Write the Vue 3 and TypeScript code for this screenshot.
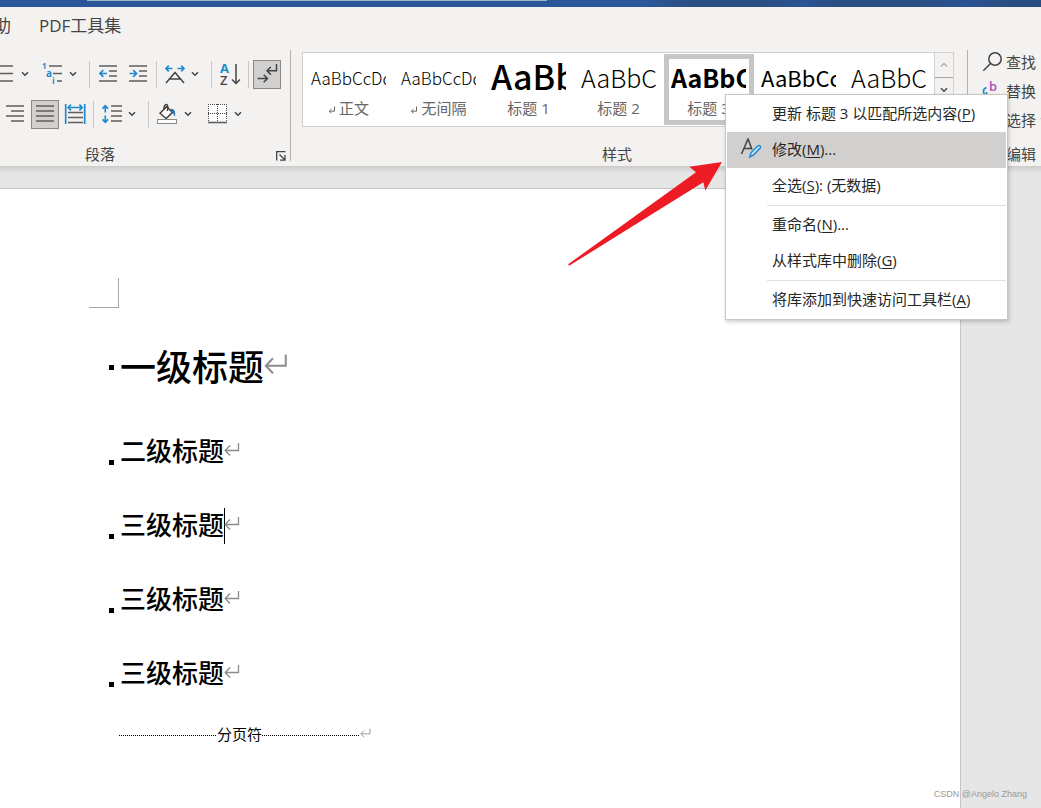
<script setup lang="ts">
interface StylePreset {
  name: string
  sample: string
  size: string
  mark?: boolean
  selected?: boolean
}

interface MenuEntry {
  text: string
  key: string
  tail: string
  icon?: boolean
  active?: boolean
  divided?: boolean
}

const presets: StylePreset[] = [
  { name: '正文', sample: 'AaBbCcDd', size: 'body', mark: true },
  { name: '无间隔', sample: 'AaBbCcDd', size: 'body', mark: true },
  { name: '标题 1', sample: 'AaBbC', size: 'huge' },
  { name: '标题 2', sample: 'AaBbCc', size: 'large' },
  { name: '标题 3', sample: 'AaBbCc', size: 'strong', selected: true },
  { name: '标题 4', sample: 'AaBbCcD', size: 'medium' },
  { name: '标题', sample: 'AaBbCc', size: 'large' },
]

const menu: MenuEntry[] = [
  { text: '更新 标题 3 以匹配所选内容(', key: 'P', tail: ')' },
  { text: '修改(', key: 'M', tail: ')...', icon: true, active: true },
  { text: '全选(', key: 'S', tail: '): (无数据)' },
  { text: '重命名(', key: 'N', tail: ')...', divided: true },
  { text: '从样式库中删除(', key: 'G', tail: ')' },
  { text: '将库添加到快速访问工具栏(', key: 'A', tail: ')', divided: true },
]

const headings = [
  { text: '二级标题', caret: false },
  { text: '三级标题', caret: true },
  { text: '三级标题', caret: false },
  { text: '三级标题', caret: false },
]
</script>

<template>
  <div class="app">
    <div class="titlebar"><div class="titleline"></div></div>

    <nav class="tabs">
      <button class="tab">帮助</button>
      <button class="tab">PDF工具集</button>
    </nav>

    <div class="ribbon">
      <section class="group paragraph">
        <div class="tools top">
          <div class="split">
            <button class="tool" aria-label="编号">
              <svg viewBox="0 0 24 24"><path class="ink" d="M2 4H20M2 11.5H20M2 19H20" /></svg>
            </button>
            <button class="drop" aria-label="编号选项"><svg viewBox="0 0 8 6"><path d="M1 1.2L4 4.2L7 1.2" /></svg></button>
          </div>
          <div class="split">
            <button class="tool" aria-label="多级列表">
              <svg viewBox="0 0 24 24">
                <path class="ink" d="M8 4H21M12 11.5H21M16 19H21" />
                <text class="bluetext" x="1" y="7" font-size="8">1</text>
                <text class="bluetext" x="5" y="15" font-size="10">a</text>
                <text class="bluetext" x="11" y="22" font-size="9">i</text>
              </svg>
            </button>
            <button class="drop" aria-label="多级列表选项"><svg viewBox="0 0 8 6"><path d="M1 1.2L4 4.2L7 1.2" /></svg></button>
          </div>
          <span class="bar"></span>
          <button class="tool" aria-label="减少缩进量">
            <svg viewBox="0 0 24 24"><path class="ink" d="M3 4H21M13 9H21M13 14H21M3 19H21" /><path class="blue" d="M11 11.5H4M7.3 8.2L4 11.5L7.3 14.8" /></svg>
          </button>
          <button class="tool" aria-label="增加缩进量">
            <svg viewBox="0 0 24 24"><path class="ink" d="M3 4H21M13 9H21M13 14H21M3 19H21" /><path class="blue" d="M3.5 11.5H10.5M7.2 8.2L10.5 11.5L7.2 14.8" /></svg>
          </button>
          <span class="bar"></span>
          <div class="split">
            <button class="tool" aria-label="中文版式">
              <svg viewBox="0 0 24 24"><path class="dark" d="M3 21L12 10.5L21 21M6.5 17H17.5" /><path class="blue" d="M9.5 6.5H3M5.8 3.7L3 6.5L5.8 9.3M14.5 6.5H21M18.2 3.7L21 6.5L18.2 9.3" /></svg>
            </button>
            <button class="drop" aria-label="中文版式选项"><svg viewBox="0 0 8 6"><path d="M1 1.2L4 4.2L7 1.2" /></svg></button>
          </div>
          <span class="bar"></span>
          <button class="tool" aria-label="排序">
            <svg viewBox="0 0 24 24">
              <text class="bluetext" x="2" y="11" font-size="13">A</text>
              <text class="darktext" x="2" y="23" font-size="13">Z</text>
              <path class="dark" d="M18 2V21.5M14 17.5L18 21.5L22 17.5" />
            </svg>
          </button>
          <span class="bar"></span>
          <button class="tool on" aria-label="显示编辑标记" aria-pressed="true">
            <svg viewBox="0 0 24 24"><path class="dark" d="M21.5 2V8.8H12M15.8 5L12 8.8L15.8 12.6M2.5 16.5H12.5M8.7 12.7L12.5 16.5L8.7 20.3" /></svg>
          </button>
        </div>

        <div class="tools bottom">
          <button class="tool" aria-label="右对齐">
            <svg viewBox="0 0 24 24"><path class="ink" d="M3 4H21M8 9H21M3 14H21M8 19H21" /></svg>
          </button>
          <button class="tool on" aria-label="两端对齐" aria-pressed="true">
            <svg viewBox="0 0 24 24"><path class="ink" d="M3 4H21M3 9H21M3 14H21M3 19H21" /></svg>
          </button>
          <button class="tool" aria-label="分散对齐">
            <svg viewBox="0 0 24 24"><path class="ink" d="M5 10.5H20M5 15.5H20M5 20.5H20" /><path class="blue" d="M2.7 2V22M21.7 2V22M5.2 5.5H19.2M8 2.7L5.2 5.5L8 8.3M16.4 2.7L19.2 5.5L16.4 8.3" /></svg>
          </button>
          <span class="bar"></span>
          <div class="split">
            <button class="tool" aria-label="行和段落间距">
              <svg viewBox="0 0 24 24"><path class="ink" d="M11 4H22M11 9H22M11 14H22M11 19H22" /><path class="blue" d="M5.3 10.5V4M2.5 6.6L5.3 3.8L8.1 6.6M5.3 13.5V20M2.5 17.4L5.3 20.2L8.1 17.4" /></svg>
            </button>
            <button class="drop" aria-label="间距选项"><svg viewBox="0 0 8 6"><path d="M1 1.2L4 4.2L7 1.2" /></svg></button>
          </div>
          <span class="bar"></span>
          <div class="split">
            <button class="tool" aria-label="底纹">
              <svg viewBox="0 0 24 24">
                <path class="dark fill" d="M5 11.3L11.7 4.6L17.5 10.4L11.2 16.5Z" />
                <path class="dark" d="M8.8 7.5C9 4 10 2.2 11.5 2.4C13 2.6 13 5 12.4 9" />
                <path class="drip" d="M15.5 6.8C19.5 6.6 20.8 9.5 20 14.5C18.8 13.5 18.6 11.4 17.6 10.2Z" />
                <rect class="swatch" x="2.5" y="17.5" width="19" height="4" />
              </svg>
            </button>
            <button class="drop wide" aria-label="底纹选项"><svg viewBox="0 0 8 6"><path d="M1 1.2L4 4.2L7 1.2" /></svg></button>
          </div>
          <div class="split">
            <button class="tool" aria-label="边框">
              <svg viewBox="0 0 24 24"><rect x="3" y="2" width="19" height="18" fill="#fff" /><path class="dots" d="M3 2.5H22M3.5 2V20M21.5 2V20M12.5 2V20M3 11.5H22" /><path class="ink" d="M3 20.5H22" /></svg>
            </button>
            <button class="drop wide" aria-label="边框选项"><svg viewBox="0 0 8 6"><path d="M1 1.2L4 4.2L7 1.2" /></svg></button>
          </div>
        </div>

        <footer class="caption cut">
          <span class="caption-text">段落</span>
          <button class="launcher" aria-label="段落设置">
            <svg viewBox="0 0 10 10"><path d="M0.7 9.5V0.7H9.5M3.5 3.5L8.5 8.5M9 4V9.2H4" /></svg>
          </button>
        </footer>
      </section>

      <span class="group-line"></span>

      <section class="group styles">
        <div class="gallery">
          <div class="presets">
            <button v-for="preset in presets" :key="preset.name" class="preset" :class="{ selected: preset.selected }">
              <span class="sample" :class="preset.size">{{ preset.sample }}</span>
              <span class="preset-name">
                <svg v-if="preset.mark" class="tiny" viewBox="0 0 8 8"><path d="M6.5 0.5V5.2H1.5M3.5 3L1.3 5.2L3.5 7.4" /></svg>
                {{ preset.name }}
              </span>
            </button>
          </div>
          <div class="scroller">
            <button class="scroll dim" aria-label="上一行"><svg viewBox="0 0 8 6"><path d="M1 4.5L4 1.5L7 4.5" /></svg></button>
            <button class="scroll" aria-label="下一行"><svg viewBox="0 0 8 6"><path d="M1 1.2L4 4.2L7 1.2" /></svg></button>
            <button class="scroll" aria-label="其他"><svg viewBox="0 0 8 6"><path d="M1 1.2L4 4.2L7 1.2" /></svg></button>
          </div>
        </div>

        <footer class="caption">
          <span class="caption-text">样式</span>
          <button class="launcher" aria-label="样式窗格">
            <svg viewBox="0 0 10 10"><path d="M0.7 9.5V0.7H9.5M3.5 3.5L8.5 8.5M9 4V9.2H4" /></svg>
          </button>
        </footer>

        <div class="menu" role="menu">
          <template v-for="entry in menu" :key="entry.key">
            <hr v-if="entry.divided" class="divider" />
            <button class="entry" :class="{ active: entry.active }" role="menuitem">
              <span class="entry-icon">
                <svg v-if="entry.icon" viewBox="0 0 24 24">
                  <path class="dark" d="M2.5 16L9 1L13 11.5M5.2 10.5H12" />
                  <path class="pencil" d="M10.8 19L12 14.8L19 7.8C20.5 6.8 22.4 8.6 21.3 10.1L14.4 17.1Z" />
                </svg>
              </span>
              <span class="entry-text">{{ entry.text }}<u>{{ entry.key }}</u>{{ entry.tail }}</span>
            </button>
          </template>
        </div>

        <svg class="arrow" viewBox="0 0 154 104" aria-hidden="true">
          <path d="M154 0L137.300 28.500L135.300 20.300L1.500 103.500Q0 104 0.500 102L128 10.300L121.300 4.700Z" />
        </svg>
      </section>

      <span class="group-line"></span>

      <section class="group editing">
        <button class="command">
          <svg viewBox="0 0 20 20"><circle class="dark" cx="13" cy="7" r="6.200" /><path class="dark" d="M8.500 11.500L1.300 18.700" /></svg>
          查找
        </button>
        <button class="command">
          <svg viewBox="0 0 20 20">
            <text class="purpletext" x="7" y="10" font-size="13">b</text>
            <path class="blue" d="M4.500 6.500C0.500 8 0.500 12 3.500 14M1 14.500H4.500V11" />
            <text class="bluetext" x="12" y="19" font-size="10">c</text>
          </svg>
          替换
        </button>
        <button class="command">
          <svg viewBox="0 0 20 20"><path class="dark" d="M6 2V17L10 13H16Z" /></svg>
          选择
          <svg class="mini" viewBox="0 0 8 6"><path class="dark" d="M1 1.200L4 4.200L7 1.200" /></svg>
        </button>
        <footer class="caption side">编辑</footer>
      </section>
    </div>

    <main class="canvas">
      <article class="page">
        <div class="margin-mark"></div>
        <h1 class="line title">
          <span class="bullet"></span><span>一级标题</span>
          <svg class="return" viewBox="0 0 16 16"><path d="M14.500 1V8.500H1.500M6 3.500L1.200 8.500L6 13.500" /></svg>
        </h1>
        <h2 v-for="(heading, index) in headings" :key="index" class="line">
          <span class="bullet"></span><span>{{ heading.text }}</span><span v-if="heading.caret" class="caret"></span>
          <svg class="return" viewBox="0 0 16 16"><path d="M14.500 1V8.500H1.500M6 3.500L1.200 8.500L6 13.500" /></svg>
        </h2>
        <div class="break">
          <span class="leader"></span><span>分页符</span><span class="leader"></span>
          <svg class="return" viewBox="0 0 16 16"><path d="M14.500 1V8.500H1.500M6 3.500L1.200 8.500L6 13.500" /></svg>
        </div>
      </article>
      <div class="credit">CSDN @Angelo Zhang</div>
    </main>
  </div>
</template>

<style>
body {
  margin: 0;
}
</style>

<style scoped>
.app {
  display: flex;
  flex-direction: column;
  min-height: 100vh;
  overflow: hidden;
  background: #f3f2f1;
  color: #444;
  font-family: "Open Sans", "Noto Sans CJK SC", sans-serif;
  font-size: 15px;
}

button {
  margin: 0;
  padding: 0;
  border: 0;
  background: none;
  color: inherit;
  font: inherit;
}

svg {
  display: block;
  flex: none;
  fill: none;
}

.titlebar {
  height: 7px;
  background: linear-gradient(90deg, #2b579a 62%, #2b4f85 66%, #2b4f85 74%, #2b5496 77%, #2a4f84 80%, #2a4f84 88%, #2b5393 93%, #2a4d80 97%);
}

.titleline {
  width: 460px;
  height: 1px;
  margin-left: 87px;
  background: #9db5cc;
}

.tabs {
  display: flex;
  gap: 28px;
  height: 43px;
  margin-left: -23px;
  align-items: flex-start;
}

.tab {
  font-size: 17px;
  line-height: 38px;
  white-space: nowrap;
}

.ribbon {
  position: relative;
  z-index: 1;
  display: flex;
  height: 116px;
  background: #f3f2f1;
}

.group {
  display: flex;
  flex-direction: column;
}

.group-line {
  flex: none;
  width: 1px;
  height: 111px;
  background: #b3b0ad;
}

.paragraph {
  flex: none;
  width: 290px;
  padding-top: 4px;
  box-sizing: border-box;
}

.tools {
  display: flex;
  align-items: center;
  gap: 6px;
  height: 40px;
}

.top {
  margin-left: -7px;
}

.bottom {
  padding-left: 3px;
}

.split {
  display: flex;
  padding-right: 2px;
}

.tool {
  display: flex;
  flex: none;
  align-items: center;
  justify-content: center;
  width: 24px;
  height: 29px;
}

.tool svg {
  width: 24px;
  height: 24px;
}

.tool.on {
  width: 28px;
  margin: 0 -2px;
  border: 1px solid #8a8886;
  box-sizing: border-box;
  background: #d2d0ce;
}

.drop {
  display: flex;
  align-items: center;
  justify-content: center;
  width: 16px;
}

.wide {
  width: 18px;
}

.drop svg,
.scroll svg,
.mini {
  width: 8px;
  height: 6px;
  stroke: #444;
  stroke-width: 1.5;
}

.bar {
  flex: none;
  width: 1px;
  height: 27px;
  background: #c8c6c4;
}

.ink {
  stroke: #605e5c;
  stroke-width: 1.6;
}

.dark {
  stroke: #444;
  stroke-width: 1.5;
}

.blue {
  stroke: #1e8bcd;
  stroke-width: 1.7;
}

.fill {
  fill: #fff;
}

.drip {
  fill: #1e6fb8;
}

.swatch {
  fill: #fff;
  stroke: #8a8886;
}

.dots {
  stroke: #444;
  stroke-dasharray: 1 1;
}

.bluetext {
  fill: #1e8bcd;
  font-weight: 700;
}

.darktext {
  fill: #444;
  font-weight: 600;
}

.purpletext {
  fill: #b14fc0;
  font-weight: 600;
}

.caption {
  display: flex;
  align-items: center;
  height: 24px;
  margin-top: auto;
  padding-right: 4px;
  line-height: 20px;
}

.cut {
  margin-left: -66px;
}

.caption-text {
  flex: 1;
  text-align: center;
}

.launcher {
  display: flex;
  justify-content: flex-end;
  width: 20px;
  padding-top: 3px;
}

.launcher svg {
  width: 10px;
  height: 10px;
  stroke: #444;
  stroke-width: 1.3;
}

.styles {
  position: relative;
  flex: 1;
  min-width: 0;
}

.gallery {
  display: flex;
  height: 73px;
  margin: 2px 13px 0 11px;
  border: 1px solid #d2d0ce;
  background: #fff;
}

.presets {
  display: flex;
  flex: 1;
  min-width: 0;
  padding-left: 1px;
  overflow: hidden;
}

.preset {
  display: flex;
  flex: none;
  flex-direction: column;
  width: 90px;
  margin: 1px 0;
  padding: 3px 8px 3px 7px;
  box-sizing: border-box;
}

.selected {
  padding: 0 3px 0 2px;
  border: 5px solid #c8c6c4;
}

.selected .sample {
  margin-top: -2px;
}

.sample {
  width: 75px;
  height: 42px;
  overflow: hidden;
  color: #000;
  font-family: "Noto Sans CJK SC", sans-serif;
  line-height: 40px;
  text-align: left;
  white-space: nowrap;
}

.body {
  font-size: 17px;
  font-weight: 300;
  line-height: 42px;
}

.huge {
  font-size: 34px;
  font-weight: 500;
  line-height: 38px;
}

.large {
  font-size: 25px;
  font-weight: 300;
}

.strong {
  font-size: 25px;
  font-weight: 700;
}

.medium {
  font-size: 22px;
}

.preset-name {
  display: flex;
  align-items: center;
  justify-content: center;
  gap: 3px;
  color: #666;
  line-height: 18px;
  white-space: nowrap;
}

.tiny {
  width: 8px;
  height: 8px;
  margin-top: 4px;
  stroke: #666;
}

.scroller {
  display: flex;
  flex-direction: column;
  width: 18px;
  border-left: 1px solid #d2d0ce;
  background: #f3f2f1;
}

.scroll {
  display: flex;
  flex: 1;
  align-items: center;
  justify-content: center;
}

.scroll + .scroll {
  border: 1px solid #a6a4a2;
  border-width: 1px 0 0;
}

.dim svg {
  stroke: #b3b0ad;
}

.menu {
  position: absolute;
  top: 44px;
  right: -41px;
  z-index: 2;
  width: 283px;
  padding: 1px;
  box-sizing: border-box;
  border: 1px solid #c8c6c4;
  background: #fff;
  box-shadow: 1px 2px 4px rgba(0, 0, 0, 0.2);
  color: #262626;
}

.entry {
  display: flex;
  align-items: center;
  width: 100%;
  height: 36px;
  white-space: nowrap;
}

.active {
  background: #d2d0ce;
}

.entry-icon {
  width: 33px;
  padding-left: 12px;
}

.entry-icon svg {
  width: 24px;
  height: 24px;
}

.entry-text {
  padding-bottom: 4px;
}

.entry u {
  text-underline-offset: 2px;
}

.pencil {
  fill: #cfe5f5;
  stroke: #1e8bcd;
  stroke-width: 1.5;
}

.divider {
  height: 1px;
  margin: 1px 0 1px 40px;
  border: 0;
  background: #e1dfdd;
}

.arrow {
  position: absolute;
  top: 112px;
  right: 245px;
  z-index: 3;
  width: 154px;
  height: 104px;
  fill: #ed1c24;
}

.editing {
  flex: none;
  width: 73px;
  overflow: hidden;
}

.command {
  display: flex;
  flex: none;
  align-items: center;
  gap: 4px;
  height: 29px;
  padding: 0 0 6px 14px;
  line-height: 20px;
  white-space: nowrap;
}

.command svg {
  width: 20px;
  height: 20px;
}

.command .mini {
  width: 8px;
  height: 6px;
}

.side {
  padding-left: 38px;
}

.canvas {
  position: relative;
  display: flex;
  flex: 1;
  padding: 22px 80px 0 0;
  background: linear-gradient(#cccbca, #e6e6e6 7px);
}

.page {
  flex: 1;
  padding: 89px 0 32px 89px;
  border: 1px solid #c6c6c6;
  border-width: 1px 1px 0 0;
  background: #fff;
  color: #000;
}

.margin-mark {
  width: 29px;
  height: 29px;
  margin-bottom: 11px;
  border: 1px solid #a6a6a6;
  border-width: 0 1px 1px 0;
}

.line {
  display: flex;
  align-items: center;
  height: 74px;
  margin: 0 0 0 20px;
  padding-bottom: 4px;
  box-sizing: border-box;
  font-family: "Noto Sans CJK SC", sans-serif;
  font-size: 26px;
  font-weight: 500;
  line-height: 40px;
}

.title {
  height: 96px;
  font-size: 36px;
}

.bullet {
  width: 5px;
  height: 5px;
  margin: 24px 6px 0 0;
  background: #000;
}

.title .bullet {
  margin-top: 4px;
}

.return {
  width: 16px;
  height: 16px;
  stroke: #8c8c8c;
  stroke-width: 1.3;
}

.title .return {
  width: 24px;
  height: 24px;
}

.caret {
  width: 1px;
  height: 36px;
  margin: 4px -1px 0 0;
  background: #000;
}

.break {
  display: flex;
  align-items: center;
  width: 252px;
  height: 44px;
  margin-left: 30px;
}

.leader {
  flex: 1;
  height: 1px;
  margin-top: 4px;
  background: repeating-linear-gradient(90deg, #000 0 1px, #fff 1px 2px);
}

.break .return {
  width: 11px;
  height: 11px;
}

.credit {
  position: absolute;
  right: 14px;
  bottom: 6px;
  color: #999;
  font-family: "Liberation Sans", sans-serif;
  font-size: 9px;
  line-height: 16px;
}
</style>
